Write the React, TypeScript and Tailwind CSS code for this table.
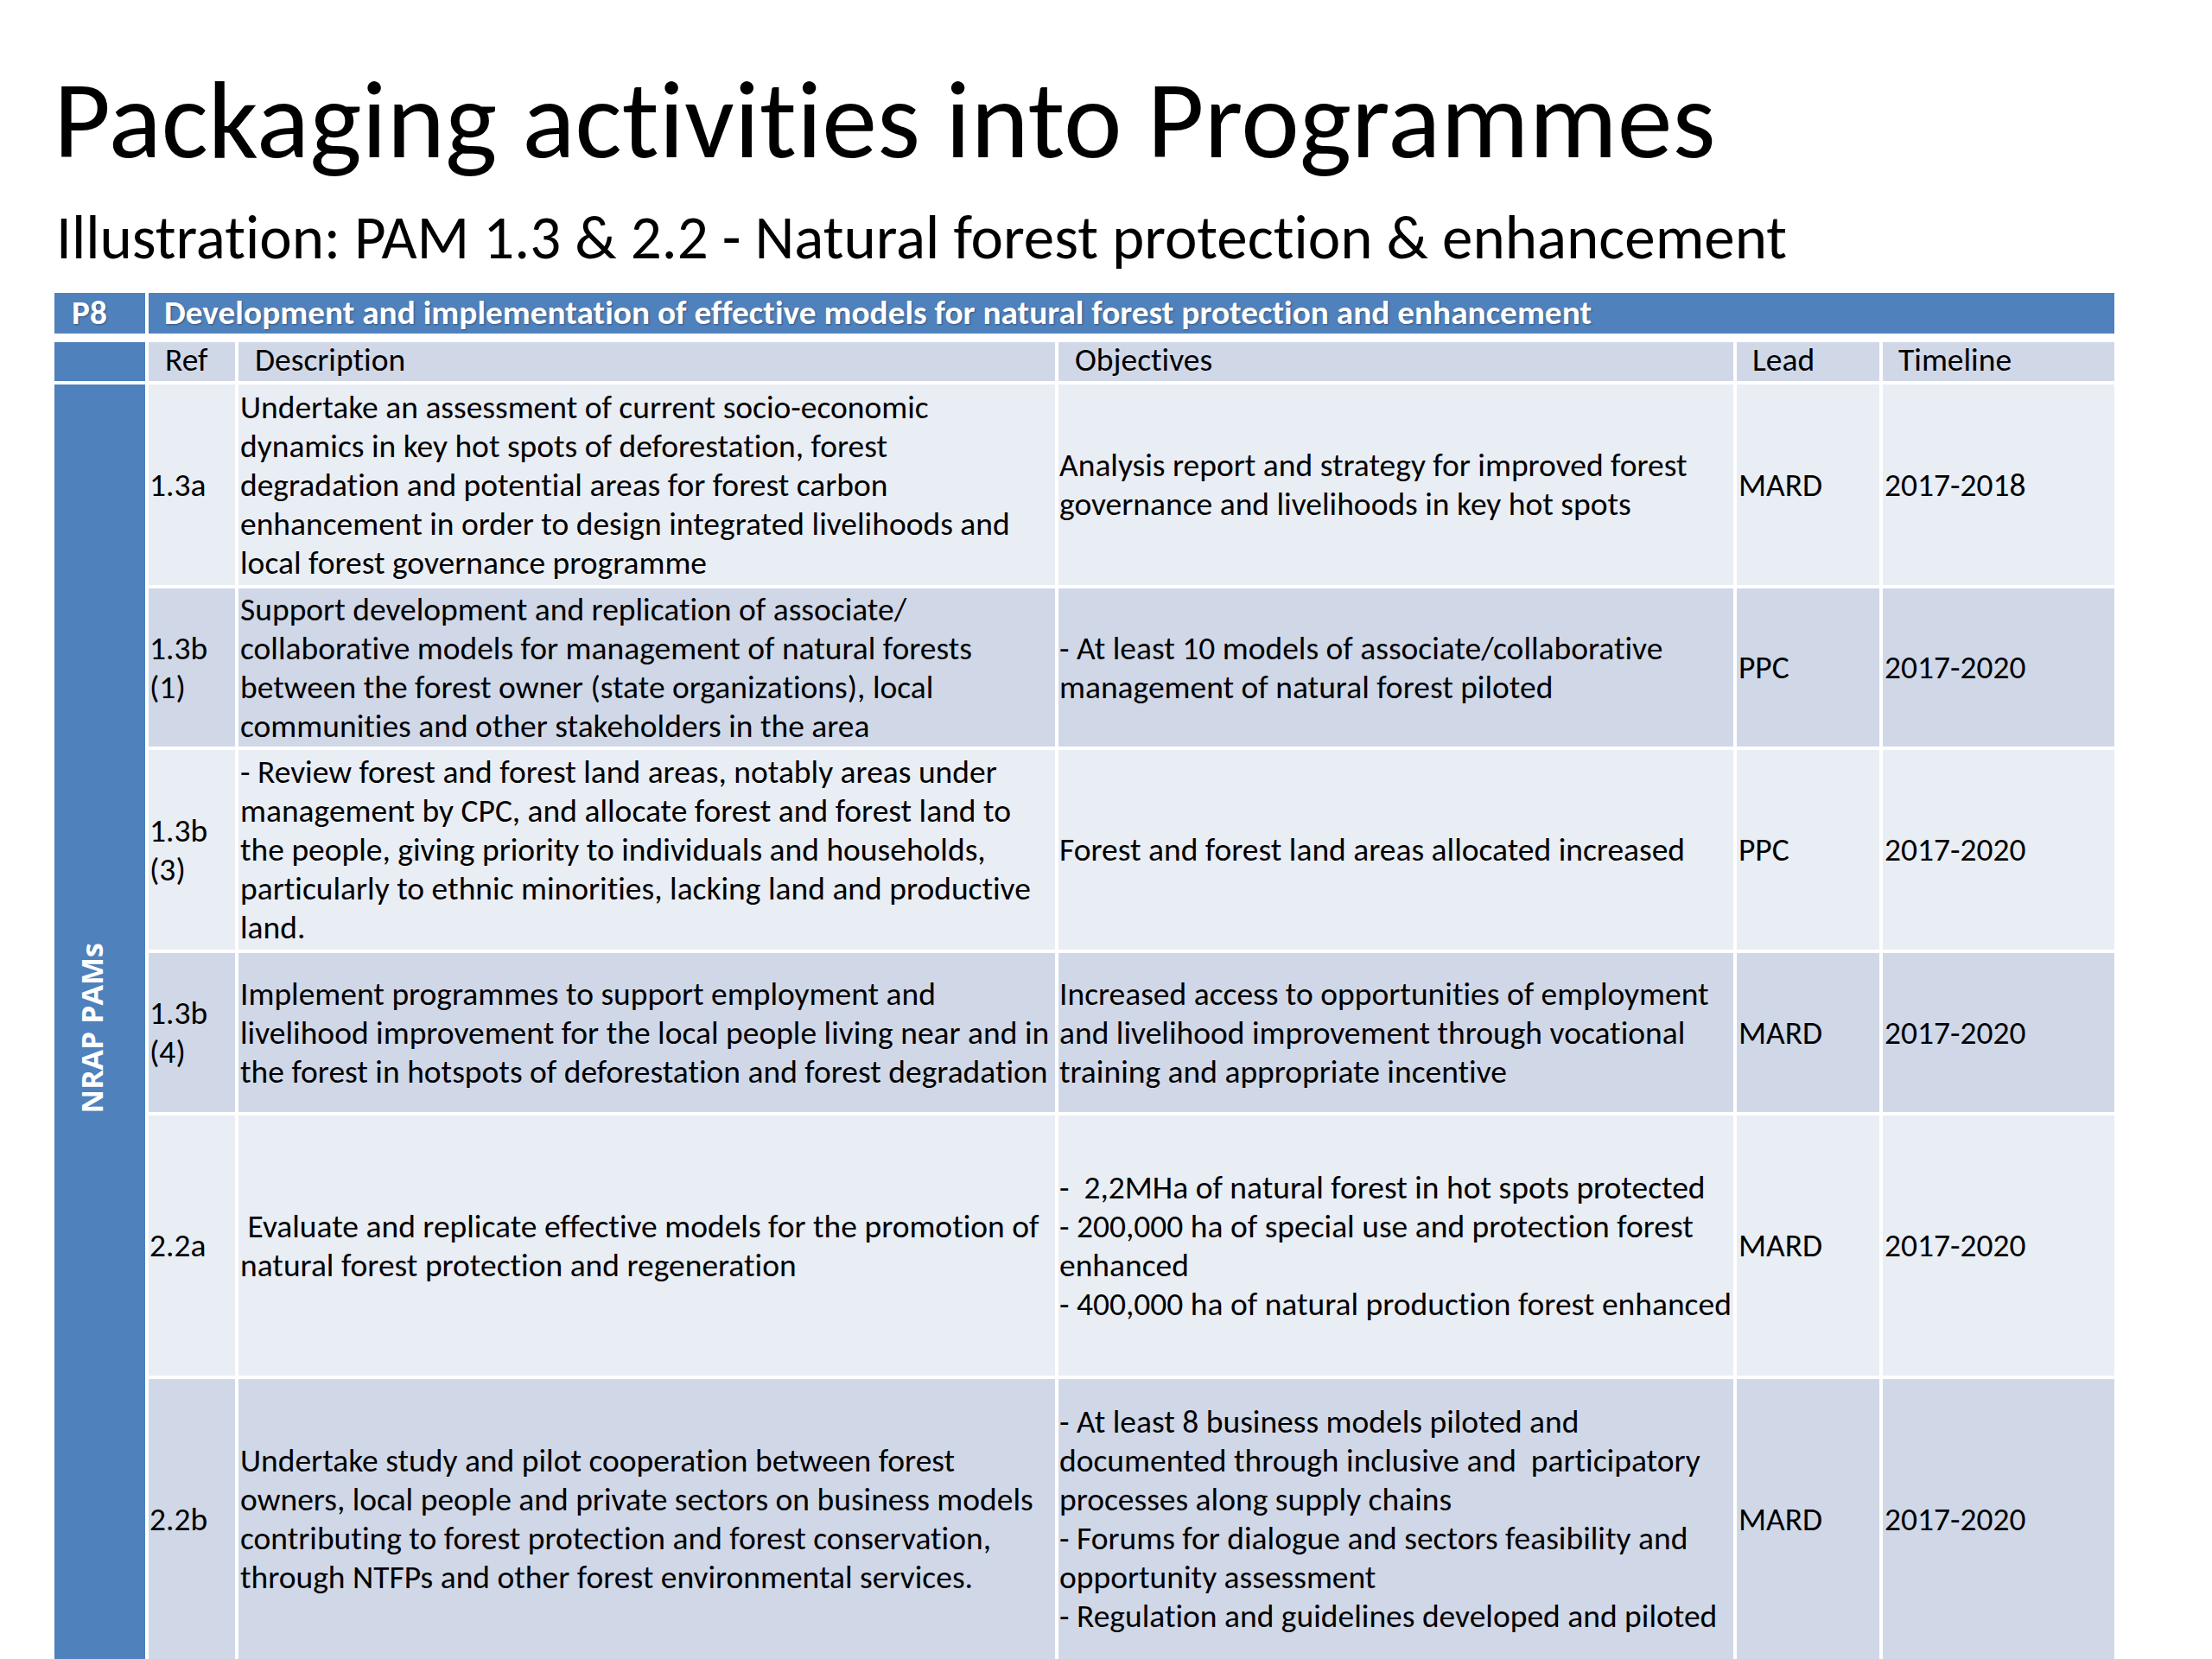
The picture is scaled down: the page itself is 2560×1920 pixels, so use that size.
const LIGHT = "bg-[#e9edf4]";
const DARK = "bg-[#d0d8e8]";

type Row = {
  ref: string;
  desc: string;
  obj: string;
  lead: string;
  time: string;
  h: string;
  dark: boolean;
};

const rows: Row[] = [
  {
    ref: "1.3a",
    desc: "Undertake an assessment of current socio-economic\ndynamics in key hot spots of deforestation, forest\ndegradation and potential areas for forest carbon\nenhancement in order to design integrated livelihoods and\nlocal forest governance programme",
    obj: "Analysis report and strategy for improved forest\ngovernance and livelihoods in key hot spots",
    lead: "MARD",
    time: "2017-2018",
    h: "h-[232px]",
    dark: false,
  },
  {
    ref: "1.3b\n(1)",
    desc: "Support development and replication of associate/\ncollaborative models for management of natural forests\nbetween the forest owner (state organizations), local\ncommunities and other stakeholders in the area",
    obj: "- At least 10 models of associate/collaborative\nmanagement of natural forest piloted",
    lead: "PPC",
    time: "2017-2020",
    h: "h-[183px]",
    dark: true,
  },
  {
    ref: "1.3b\n(3)",
    desc: "- Review forest and forest land areas, notably areas under\nmanagement by CPC, and allocate forest and forest land to\nthe people, giving priority to individuals and households,\nparticularly to ethnic minorities, lacking land and productive\nland.",
    obj: "Forest and forest land areas allocated increased",
    lead: "PPC",
    time: "2017-2020",
    h: "h-[231px]",
    dark: false,
  },
  {
    ref: "1.3b\n(4)",
    desc: "Implement programmes to support employment and\nlivelihood improvement for the local people living near and in\nthe forest in hotspots of deforestation and forest degradation",
    obj: "Increased access to opportunities of employment\nand livelihood improvement through vocational\ntraining and appropriate incentive",
    lead: "MARD",
    time: "2017-2020",
    h: "h-[184px]",
    dark: true,
  },
  {
    ref: "2.2a",
    desc: " Evaluate and replicate effective models for the promotion of\nnatural forest protection and regeneration",
    obj: "-  2,2MHa of natural forest in hot spots protected\n- 200,000 ha of special use and protection forest\nenhanced\n- 400,000 ha of natural production forest enhanced",
    lead: "MARD",
    time: "2017-2020",
    h: "h-[301px]",
    dark: false,
  },
  {
    ref: "2.2b",
    desc: "Undertake study and pilot cooperation between forest\nowners, local people and private sectors on business models\ncontributing to forest protection and forest conservation,\nthrough NTFPs and other forest environmental services.",
    obj: "- At least 8 business models piloted and\ndocumented through inclusive and  participatory\nprocesses along supply chains\n- Forums for dialogue and sectors feasibility and\nopportunity assessment\n- Regulation and guidelines developed and piloted",
    lead: "MARD",
    time: "2017-2020",
    h: "h-[324px]",
    dark: true,
  },
];

function Cell({ text, bg, h, pad = "pl-[2px]" }: { text: string; bg: string; h: string; pad?: string }) {
  return (
    <div className={`${bg} ${h} ${pad} flex items-center`}>
      <div className="whitespace-pre text-[37.5px] leading-[45px] text-black">{text}</div>
    </div>
  );
}

export default function App() {
  return (
    <div className="w-[2560px] h-[1920px] overflow-hidden bg-white font-['Carlito','Liberation_Sans',sans-serif] text-black [font-variant-ligatures:none]">
      <div className="pl-[62px] pt-[74px]">
        <h1 className="text-[128px] leading-none font-normal whitespace-nowrap">Packaging activities into Programmes</h1>
        <h2 className="mt-[37px] pl-[3px] text-[71px] leading-none font-normal whitespace-nowrap">
          Illustration: PAM 1.3 &amp; 2.2 - Natural forest protection &amp; enhancement
        </h2>
      </div>

      <div className="ml-[63px] mt-[29px] w-[2384px]">
        {/* P8 header bar */}
        <div className="flex gap-[4px] h-[47px] text-white font-bold text-[39.3px] leading-[45px] [text-shadow:1px_1px_2px_rgba(0,0,0,0.35)]">
          <div className="w-[105px] bg-[#4f81bd] flex items-center pl-[20px]">P8</div>
          <div className="flex-1 bg-[#4f81bd] flex items-center pl-[18px] whitespace-nowrap">
            Development and implementation of effective models for natural forest protection and enhancement
          </div>
        </div>

        {/* Table body */}
        <div className="mt-[10px] grid grid-cols-[105px_100px_945px_781px_165px_268px] gap-x-[4px] gap-y-[4px]">
          {/* column header row */}
          <div className="bg-[#4f81bd] h-[45px]" />
          <Cell text="Ref" bg={DARK} h="h-[45px]" pad="pl-[19px] pb-[4px]" />
          <Cell text="Description" bg={DARK} h="h-[45px]" pad="pl-[19px] pb-[4px]" />
          <Cell text="Objectives" bg={DARK} h="h-[45px]" pad="pl-[19px] pb-[4px]" />
          <Cell text="Lead" bg={DARK} h="h-[45px]" pad="pl-[18px] pb-[4px]" />
          <Cell text="Timeline" bg={DARK} h="h-[45px]" pad="pl-[18px] pb-[4px]" />

          {/* merged vertical label cell */}
          <div className="row-span-6 bg-[#4f81bd] flex items-center justify-center pt-[14px] pr-[18px]">
            <span className="[writing-mode:vertical-rl] rotate-180 font-['Open_Sans',sans-serif] font-bold text-[34px] text-white whitespace-nowrap">
              NRAP PAMs
            </span>
          </div>

          {rows.map((r, i) => {
            const bg = r.dark ? DARK : LIGHT;
            return [
              <Cell key={`ref${i}`} text={r.ref} bg={bg} h={r.h} pad="pl-[1px]" />,
              <Cell key={`desc${i}`} text={r.desc} bg={bg} h={r.h} />,
              <Cell key={`obj${i}`} text={r.obj} bg={bg} h={r.h} pad="pl-[1px]" />,
              <Cell key={`lead${i}`} text={r.lead} bg={bg} h={r.h} pad="pl-[2px]" />,
              <Cell key={`time${i}`} text={r.time} bg={bg} h={r.h} pad="pl-[2px]" />,
            ];
          })}
        </div>
      </div>
    </div>
  );
}
